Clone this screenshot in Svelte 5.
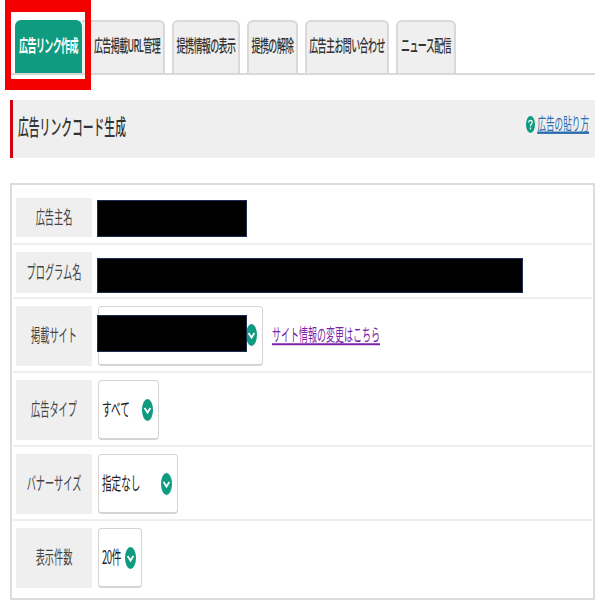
<script lang="ts">
  const tabs = [
    { name: '広告リンク作成', width: 67, active: true },
    { name: '広告掲載URL管理', width: 83 },
    { name: '提携情報の表示', width: 68 },
    { name: '提携の解除', width: 51 },
    { name: '広告主お問い合わせ', width: 84 },
    { name: 'ニュース配信', width: 60 }
  ];
</script>

{#snippet chevron()}
  <svg class="chevron" viewBox="0 0 11 22" aria-hidden="true">
    <ellipse cx="5.5" cy="11" rx="5.5" ry="11" fill="#0f9b80" />
    <path d="M2.6 9 5.5 13.5 8.4 9" fill="none" stroke="#fff" stroke-width="1.8" />
  </svg>
{/snippet}

<div class="page">
  <div class="highlight"></div>

  <nav class="tabs">
    {#each tabs as tab}
      <div class="tab" class:active={tab.active} style="width: {tab.width}px">
        <span class="tall">{tab.name}</span>
      </div>
    {/each}
  </nav>

  <header class="title">
    <h1><span class="tall">広告リンクコード生成</span></h1>
    <a class="howto" href="#howto">
      <svg class="help" viewBox="0 0 9 17" aria-hidden="true">
        <ellipse cx="4.5" cy="8.5" rx="4.5" ry="8.5" fill="#0f9b80" />
        <path d="M2.8 6.5C2.8 3.6 6.2 3.6 6.2 6.2 6.2 8 4.5 8 4.5 10.2" fill="none" stroke="#fff" stroke-width="1.2" />
        <rect x="3.9" y="11.5" width="1.2" height="1.8" fill="#fff" />
      </svg>
      <span class="tall">広告の貼り方</span>
    </a>
  </header>

  <section class="card">
    <div class="row">
      <div class="label"><span class="tall">広告主名</span></div>
      <div class="redacted first"></div>
    </div>
    <div class="row">
      <div class="label"><span class="tall">プログラム名</span></div>
      <div class="redacted second"></div>
    </div>
    <div class="row tall-row">
      <div class="label"><span class="tall">掲載サイト</span></div>
      <div class="value">
        <div class="select site">
          <div class="redacted third"></div>
          {@render chevron()}
        </div>
        <a class="site-link" href="#site"><span class="tall">サイト情報の変更はこちら</span></a>
      </div>
    </div>
    <div class="row tall-row">
      <div class="label"><span class="tall">広告タイプ</span></div>
      <div class="value">
        <div class="select type"><span class="tall">すべて</span>{@render chevron()}</div>
      </div>
    </div>
    <div class="row tall-row">
      <div class="label"><span class="tall">バナーサイズ</span></div>
      <div class="value">
        <div class="select size"><span class="tall">指定なし</span>{@render chevron()}</div>
      </div>
    </div>
    <div class="row tall-row">
      <div class="label"><span class="tall">表示件数</span></div>
      <div class="value">
        <div class="select count"><span class="tall">20件</span>{@render chevron()}</div>
      </div>
    </div>
  </section>
</div>

<style>
  :global(body) {
    margin: 0;
    background: #fff;
  }
  .page {
    position: relative;
    width: 611px;
    height: 611px;
    box-sizing: border-box;
    padding: 20px 16px 0 10px;
    font-family: "Noto Sans CJK JP", "Liberation Sans", sans-serif;
    color: #333;
    overflow: hidden;
  }
  .tall {
    display: inline-block;
    transform: translateY(-2px) scaleY(1.95);
    white-space: nowrap;
  }
  .highlight {
    position: absolute;
    left: 5px;
    top: 0;
    width: 74px;
    height: 67px;
    border: solid #f40000;
    border-width: 12px 6px 11px;
    z-index: 2;
  }
  .tabs {
    display: flex;
    gap: 7px;
    height: 55px;
    padding-left: 5px;
    border-bottom: 2px solid #d9d9d9;
    box-sizing: border-box;
  }
  .tab {
    display: flex;
    align-items: center;
    justify-content: center;
    box-sizing: border-box;
    background: #efefef;
    border: 2px solid #d9d9d9;
    border-bottom: 0;
    border-radius: 6px 6px 0 0;
    font-size: 9px;
    font-weight: 500;
    color: #333;
    letter-spacing: -0.6px;
  }
  .tab:nth-child(2) {
    margin-left: -7px;
    border-left: 0;
    border-radius: 0 6px 0 0;
    padding-left: 9px;
  }
  .tab.active {
    background: #0f9b80;
    border-color: #0f9b80;
    color: #fff;
    font-weight: 700;
  }
  .title {
    display: flex;
    align-items: center;
    justify-content: space-between;
    height: 58px;
    margin-top: 25px;
    box-sizing: border-box;
    background: #efefef;
    border-left: 3px solid #d0000f;
    padding: 0 6px 0 5px;
  }
  h1 {
    margin: 0 0 2px;
    font-size: 10.8px;
    font-weight: 500;
    line-height: 1;
    color: #333;
  }
  .howto {
    display: flex;
    align-items: center;
    gap: 2px;
    margin-bottom: 10px;
    margin-left: 1px;
    font-size: 8.6px;
    color: #2a6cb0;
  }
  .howto .tall,
  .site-link .tall {
    text-decoration: underline;
  }
  .help {
    width: 9px;
    height: 17px;
  }
  .card {
    margin-top: 25px;
    height: 417px;
    box-sizing: border-box;
    border: 2px solid #dcdcdc;
    padding: 6px 1px 0;
  }
  .row {
    display: grid;
    grid-template-columns: 76px 1fr;
    column-gap: 5px;
    padding: 7px 3px;
    height: 54px;
    box-sizing: border-box;
    border-bottom: 2px solid #eee;
  }
  .row.tall-row {
    height: 74px;
  }
  .row:last-child {
    border-bottom: 0;
  }
  .label {
    display: flex;
    align-items: center;
    justify-content: center;
    background: #efefef;
    font-size: 9.2px;
    color: #444;
  }
  .redacted {
    background: #000;
    border: 1px solid #1b2d52;
    box-sizing: border-box;
  }
  .redacted.first {
    width: 150px;
    height: 37px;
    margin-top: 2px;
  }
  .redacted.second {
    width: 426px;
    height: 35px;
    margin-top: 6px;
  }
  .redacted.third {
    position: absolute;
    left: -2px;
    top: 8px;
    width: 150px;
    height: 37px;
  }
  .value {
    display: flex;
    align-items: center;
    gap: 9px;
  }
  .select {
    position: relative;
    display: flex;
    align-items: center;
    justify-content: space-between;
    box-sizing: border-box;
    height: 60px;
    background: #fff;
    border: 1px solid #d4d4d4;
    border-bottom-width: 2px;
    border-radius: 4px;
    font-size: 9.6px;
    color: #222;
    padding: 0 5px 0 3px;
    margin-left: 1px;
  }
  .select.site {
    width: 165px;
    justify-content: flex-end;
    padding-bottom: 1px;
    padding-right: 5px;
  }
  .select.type {
    width: 61px;
  }
  .select.size {
    width: 80px;
  }
  .select.count {
    width: 44px;
    padding-right: 5px;
    letter-spacing: -0.5px;
  }
  .chevron {
    width: 11px;
    height: 22px;
    flex: none;
  }
  .site-link {
    font-size: 9px;
    color: #7a1fa8;
  }
</style>
